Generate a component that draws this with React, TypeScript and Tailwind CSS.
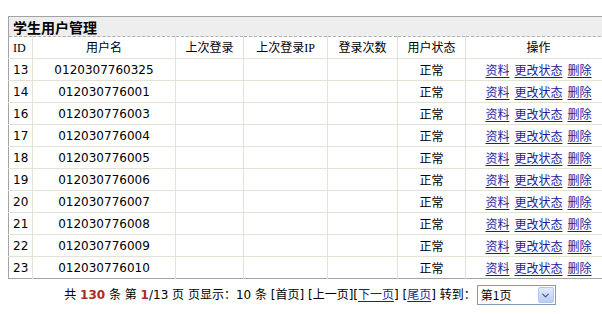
import { ChevronDown } from "lucide-react";

const users = [
  { id: 13, name: "0120307760325" },
  { id: 14, name: "012030776001" },
  { id: 16, name: "012030776003" },
  { id: 17, name: "012030776004" },
  { id: 18, name: "012030776005" },
  { id: 19, name: "012030776006" },
  { id: 20, name: "012030776007" },
  { id: 21, name: "012030776008" },
  { id: 22, name: "012030776009" },
  { id: 23, name: "012030776010" },
];

const cols = ["ID", "用户名", "上次登录", "上次登录IP", "登录次数", "用户状态", "操作"];

const cell = "border-l border-[#e4e2d4] first:border-l-0 h-[22px] p-0 text-center whitespace-nowrap leading-none";
const link = "text-[#1d1d9c] underline underline-offset-2";

export default function App() {
  return (
    <div className="w-[602px] h-[314px] overflow-hidden bg-white text-black text-[12px] font-['DejaVu_Sans','Noto_Sans_CJK_SC',sans-serif]">
      <div className="pt-[16px] pl-[8px]">
        <table className="w-[604px] table-fixed border-collapse border border-[#a3a3a3]">
          <colgroup>
            <col className="w-[24px]" />
            <col className="w-[143px]" />
            <col className="w-[68px]" />
            <col className="w-[84px]" />
            <col className="w-[70px]" />
            <col className="w-[68px]" />
            <col />
          </colgroup>
          <thead>
            <tr>
              <th
                colSpan={7}
                className="h-[20px] bg-[#eeeeee] border-b border-dashed border-[#b0b0b0] pl-[4px] text-left text-[14px] font-bold leading-none font-['Noto_Sans_CJK_SC',sans-serif]"
              >
                学生用户管理
              </th>
            </tr>
            <tr className="border-b border-[#e4e2d4] font-['Liberation_Serif','Noto_Sans_CJK_SC',serif]">
              {cols.map((c, i) => (
                <th
                  key={c}
                  className={`${cell} font-normal ${i === 0 ? "text-left pl-[4px]" : ""}`}
                >
                  {c}
                </th>
              ))}
            </tr>
          </thead>
          <tbody>
            {users.map((u) => (
              <tr key={u.id} className="border-b border-[#e4e2d4] last:border-b-0">
                <td className={`${cell} text-left pl-[4px]`}>{u.id}</td>
                <td className={cell}>{u.name}</td>
                <td className={cell}></td>
                <td className={cell}></td>
                <td className={cell}></td>
                <td className={`${cell} font-['Noto_Sans_CJK_SC',sans-serif]`}>正常</td>
                <td className={`${cell} font-['Noto_Sans_CJK_SC',sans-serif]`}>
                  <span className="inline-flex gap-[5px]">
                    <a className={link} href="#">资料</a>
                    <a className={link} href="#">更改状态</a>
                    <a className={link} href="#">删除</a>
                  </span>
                </td>
              </tr>
            ))}
          </tbody>
        </table>
        <div className="w-[604px] flex justify-center items-center h-[32px]">
          <span className="whitespace-pre">
            共 <b className="text-[#b0282a]">130</b> 条 第 <b className="text-[#b0282a]">1</b>/13 页 页显示：10 条 [首页] [上一页][<a className={link} href="#">下一页</a>] [<a className={link} href="#">尾页</a>] 转到：
          </span>
          <div className="ml-[1px] w-[79px] h-[20px] border border-[#7f9db9] flex items-center bg-white">
            <span className="flex-1 pl-[3px] font-['Noto_Sans_CJK_SC',sans-serif]">第1页</span>
            <span className="w-[16px] h-[16px] mr-[1px] rounded-[2px] bg-gradient-to-b from-[#e1eafe] to-[#b9cdf6] border border-[#b4c6ee] flex items-center justify-center">
              <ChevronDown size={11} strokeWidth={3} color="#4d6185" />
            </span>
          </div>
        </div>
      </div>
    </div>
  );
}
